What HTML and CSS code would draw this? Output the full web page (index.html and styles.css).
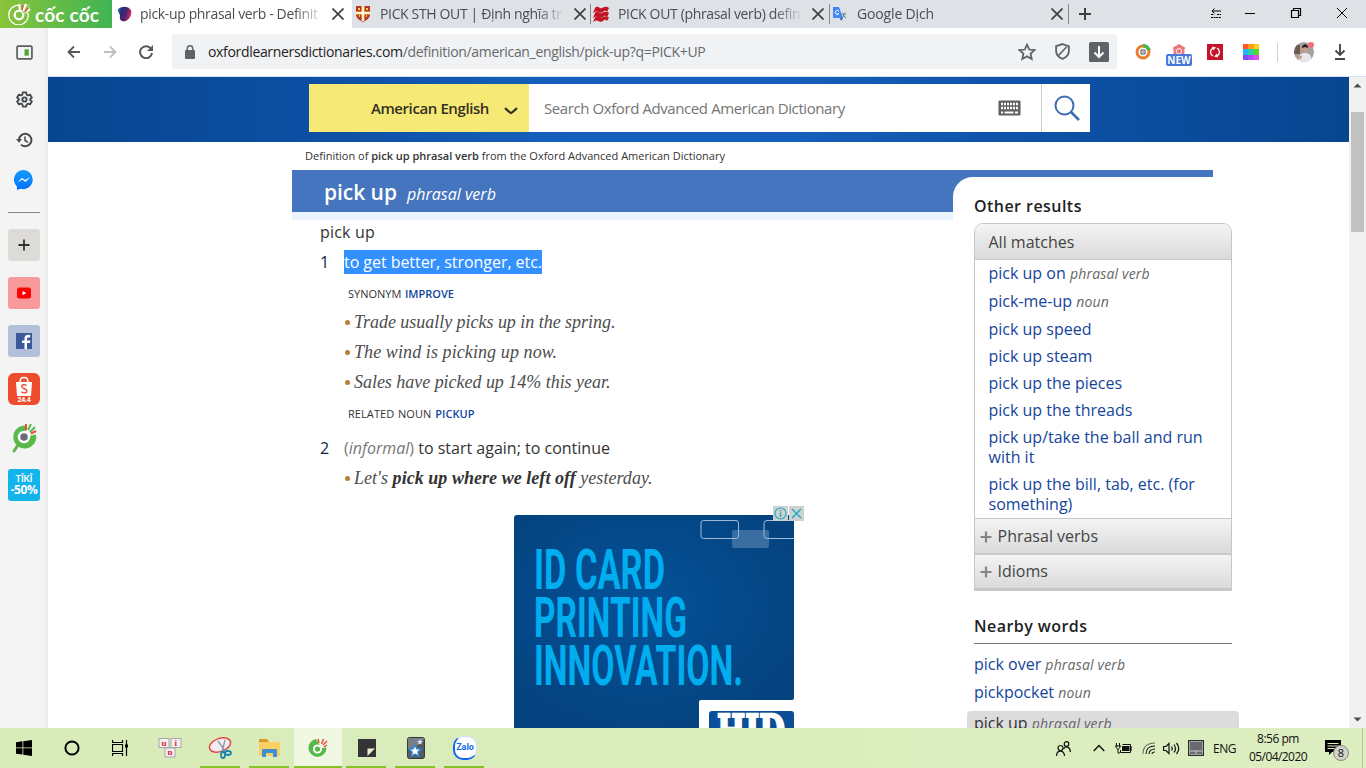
FILE: index.html
```html
<!DOCTYPE html>
<html lang="en">
<head>
<meta charset="utf-8">
<title>pick-up phrasal verb - Definition</title>
<link rel="stylesheet" href="styles.css">
</head>
<body>
<header class="tabs">
  <div class="brand">
    <svg class="brand-mark" viewBox="0 0 24 24"><circle cx="11.500" cy="14" r="9.800" fill="none" stroke="#fff" stroke-width="1.300"/><circle cx="12" cy="14" r="4.300" fill="none" stroke="#fff" stroke-width="2.300"/><path d="M12 3h11v9h-7z" fill="#8fcc5a"/><path d="M13 9l-1-6M16 10l3-7M18 12l5-4" stroke="#fff" stroke-width="2"/><path d="M15 9l1-5M18 11l3-4" stroke="#e8503c" stroke-width="1.500"/></svg>
    <span class="brand-name">cốc cốc</span>
  </div>
  <div class="tab active">
    <svg class="fav" viewBox="0 0 16 16"><defs><linearGradient id="ox" x1="0" x2="1" y2=".3"><stop offset="0" stop-color="#2a8fc8"/><stop offset=".3" stop-color="#2c2c78"/><stop offset=".7" stop-color="#4d256d"/><stop offset="1" stop-color="#d02b62"/></linearGradient></defs><path d="M1 3C4-.5 12-1 15 4c1 5-1 10-7 12-4 0-5-2-5-5C4 7 0 6 1 3z" fill="url(#ox)"/></svg>
    <span class="tab-title">pick-up phrasal verb - Definit</span>
    <svg class="close" viewBox="0 0 12 12"><path d="M.5.500l11 11M11.500.500l-11 11"/></svg>
  </div>
  <div class="tab">
    <svg class="fav" viewBox="0 0 16 16"><path d="M1 0h14v8c0 4-3 6-7 8-4-2-7-4-7-8z" fill="#b8332c"/><path d="M8 0v15M1 7h14" stroke="#f5cf4b" stroke-width="3"/><path d="M8 0v15M1 7h14" stroke="#fff" stroke-width="1.500"/><path d="M3 3h2M11 3h2M4 10h1M11 10h1" stroke="#f5cf4b" stroke-width="2"/></svg>
    <span class="tab-title">PICK STH OUT | Định nghĩa tr</span>
    <svg class="close" viewBox="0 0 12 12"><path d="M.5.500l11 11M11.500.500l-11 11"/></svg>
  </div>
  <div class="tab sep">
    <svg class="fav" viewBox="0 0 16 16"><g fill="#c41425"><path d="M2 2c2-2 3-1 5 0s3-1 4-1 3-1 5 1l-2 4c-2-2-3-1-4 0s-3 1-5 0-3 0-5 1z"/><path d="M2 7c2-2 3-1 5 0s3-1 4-1 3-1 5 1l-2 4c-2-2-3-1-4 0s-3 1-5 0-3 0-5 1z"/><path d="M2 11.500c2-2 3-1 5 0s3-1 4-1 3-1 5 1l-2 3.500c-2-2-3-1-4 0s-3 1-5 0-3 0-5 1z"/></g></svg>
    <span class="tab-title">PICK OUT (phrasal verb) defin</span>
    <svg class="close" viewBox="0 0 12 12"><path d="M.5.500l11 11M11.500.500l-11 11"/></svg>
  </div>
  <div class="tab sep">
    <svg class="fav" viewBox="0 0 16 16"><path d="M7 5h7a1 1 0 0 1 1 1v8a1 1 0 0 1-1 1h-4z" fill="#dadce0"/><path d="M1 1h6l4 11H2a1 1 0 0 1-1-1z" fill="#4285f4"/><path d="M8 12h3l-2 3z" fill="#2459c9"/><path d="M7 5.500A2 2 0 1 0 7 7.500H5.500" fill="none" stroke="#fff"/><path d="M10 8h4M12 7v1c0 2-1 3-2 4M11 9l3 3" stroke="#607d8b" fill="none"/></svg>
    <span class="tab-title gd">Google Dịch</span>
    <svg class="close" viewBox="0 0 12 12"><path d="M.5.500l11 11M11.500.500l-11 11"/></svg>
  </div>
  <div class="newtab sep"><svg width="12" height="12" viewBox="0 0 12 12"><path d="M6 0v12M0 6h12" stroke="#3c4043" stroke-width="2"/></svg></div>
  <div class="winctl">
    <svg width="12" height="12" viewBox="0 0 12 12"><path d="M2 4h9M4.500 1.500L2 4l2.500 2.500" fill="none" stroke="#000"/><path d="M1 7.500h3M7 7.500h4M1 10.500h10" stroke="#000" stroke-dasharray="2 .600"/></svg>
    <svg width="12" height="12" viewBox="0 0 12 12"><path d="M1 6.500h10" stroke="#000"/></svg>
    <svg width="12" height="12" viewBox="0 0 12 12"><path d="M1.500 3.500h7v7h-7zM3.500 3V1.500h7v7H9" fill="none" stroke="#000" stroke-width="1.200"/></svg>
    <svg width="12" height="12" viewBox="0 0 12 12"><path d="M1 1l10 10M11 1L1 11" stroke="#000"/></svg>
  </div>
</header>

<div class="middle">
  <aside class="side">
    <svg class="s-ico i1" viewBox="0 0 16 14"><rect x="1" y="1" width="14" height="12" rx="1" fill="none" stroke="#5a5e62" stroke-width="1.600"/><rect x="8" y="4" width="4" height="6" fill="#4fa836"/></svg>
    <svg class="s-ico i2" viewBox="0 0 24 24"><path d="M9.600 2h4.800l.6 3.200 2 1.100 3-1.100 2.400 4.200-2.400 2v1.400l2.400 2-2.400 4.100-3-1.100-2 1.200-.6 3.100H9.600L9 18.900l-2-1.200-3 1.100-2.400-4.100 2.400-2v-1.400l-2.400-2L4 5.200l3 1.100 2-1.100z" fill="none" stroke="#45484b" stroke-width="2.600" stroke-linejoin="round"/><circle cx="12" cy="12" r="3" fill="none" stroke="#45484b" stroke-width="2.800"/></svg>
    <svg class="s-ico i3" viewBox="0 0 17 16"><path d="M3 8a6.200 6.200 0 1 1 2 4.600" fill="none" stroke="#45484b" stroke-width="1.900"/><path d="M0 7h6L3 10.800z" fill="#45484b"/><path d="M9 4.500V8.500l3 1.800" fill="none" stroke="#45484b" stroke-width="1.500"/></svg>
    <svg class="s-ico i4" viewBox="0 0 20 20"><defs><linearGradient id="ms" x2="0" y2="1"><stop stop-color="#159dff"/><stop offset="1" stop-color="#0070fb"/></linearGradient></defs><path d="M10 0a9.600 9.600 0 1 1-3.500 18.800L3 20v-3.500A9.600 9.600 0 0 1 10 0z" fill="url(#ms)"/><path d="M3.500 12.500l4.500-4.800 2.900 2.200 5.600-3-5.200 5-2.900-2.300z" fill="#fff"/></svg>
    <hr>
    <div class="app plus"><svg viewBox="0 0 32 32"><path d="M16 10.500v11M10.500 16h11" stroke="#333" stroke-width="1.800"/></svg></div>
    <div class="app yt"><svg viewBox="0 0 32 32"><rect x="9" y="10.500" width="14" height="11" rx="2.500" fill="#f00"/><path d="M14.500 14v4.200l3.800-2.100z" fill="#fff"/></svg></div>
    <div class="app fb"><svg viewBox="0 0 32 32"><rect x="8" y="8" width="16" height="16" fill="#3b5998"/><path d="M19 24v-6h3l.4-2.500H19V14c0-1 .4-1.500 1.600-1.500h1.600V10c-3-.6-5.700 0-5.700 3.500v2H14V18h2.500v6z" fill="#fff"/></svg></div>
    <div class="app shopee"><svg viewBox="0 0 32 32"><path d="M8 9h16l-1 14H9z" fill="#fff"/><path d="M12 9c0-6 8-6 8 0" fill="none" stroke="#fff" stroke-width="1.500"/><path d="M18.700 12.500c-2-1.500-5-1-5 1 0 2.500 5.300 2 5.300 4.500 0 2-3 2.500-5.500.8" fill="none" stroke="#ee4d2d" stroke-width="1.400"/></svg><span class="s244">24.4</span></div>
    <div class="app"><svg viewBox="0 0 32 32"><path d="M10 24l-4 6" stroke="#62b848" stroke-width="3" stroke-linecap="round"/><path d="M17 4.500a11.500 11.500 0 1 0 11 9L21 15l-3-5z" fill="#5ab94a"/><circle cx="16" cy="16" r="5" fill="#6b6b78" stroke="#fff" stroke-width="2.500"/><path d="M18 9V3M23 12.500l5-2.500" stroke="#ee4e39" stroke-width="2"/><path d="M20 9l3-6M22 11l5-5" stroke="#57b848" stroke-width="2"/></svg></div>
    <div class="app tiki"><span class="tk">TÎKÎ</span><span class="t50">-50%</span></div>
  </aside>

  <div class="main">
    <div class="toolbar">
      <svg class="nav" viewBox="0 0 14 14"><path d="M13 7H2M7 1.500L1.500 7 7 12.500" fill="none" stroke="#55585c" stroke-width="1.800"/></svg>
      <svg class="nav n2" viewBox="0 0 14 14"><path d="M1 7h11M7 1.500L12.500 7 7 12.500" fill="none" stroke="#bdbfc2" stroke-width="1.800"/></svg>
      <svg class="nav n3" viewBox="0 0 14 14"><path d="M12 3.800A6 6 0 1 0 13 8" fill="none" stroke="#55585c" stroke-width="2"/><path d="M14 0v6H8z" fill="#55585c"/></svg>
      <div class="url">
        <svg class="lock" viewBox="0 0 10 14"><rect y="5" width="10" height="9" rx="1" fill="#5f6368"/><path d="M2.300 6V3.500a2.700 2.700 0 0 1 5.400 0V6" fill="none" stroke="#5f6368" stroke-width="1.500"/></svg>
        <span class="addr"><b>oxfordlearnersdictionaries.com</b>/definition/american_english/pick-up?q=PICK+UP</span>
        <svg class="star" viewBox="0 0 16 16"><path d="M8 1.500l2 4.300 4.700.5-3.500 3.200 1 4.800L8 11.900l-4.200 2.400 1-4.800L1.300 6.300 6 5.800z" fill="none" stroke="#5f6368" stroke-width="1.600"/></svg>
        <svg class="shield" viewBox="0 0 14 16"><path d="M7 1l6 2v4.500c0 3.500-2.500 6-6 7.500-3.500-1.500-6-4-6-7.500V3z" fill="none" stroke="#5f6368" stroke-width="1.700"/><path d="M3 12l8-8.500" stroke="#5f6368" stroke-width="1.600"/></svg>
        <svg class="dlbox" viewBox="0 0 20 20"><rect width="20" height="20" rx="1.500" fill="#5f6368"/><path d="M10 4v11M5.500 10.500L10 15l4.500-4.500" fill="none" stroke="#fff" stroke-width="2"/></svg>
      </div>
      <svg class="ext" viewBox="0 0 16 16"><circle cx="8" cy="8" r="6" fill="none" stroke="#ed7d2b" stroke-width="3"/><path d="M8 0c4 0 6 2 8 6l-4 0C11 4 10 3.500 8 3.500z" fill="#43b64e"/><circle cx="8" cy="8" r="3" fill="#777b85"/><path d="M8 5v6M5 8h6" stroke="#fff" stroke-width=".600"/></svg>
      <div class="newext"><svg viewBox="0 0 16 11"><path d="M8 0l7 4-1 2v5H2V6L1 4z" fill="#e9797e"/><circle cx="8" cy="8" r="3" fill="none" stroke="#fff"/></svg><span>NEW</span></div>
      <svg class="ext red" viewBox="0 0 16 16"><path fill="#c8142b" d="M0 0h16v16H0z"/><path d="M6 12a4.500 4.500 0 0 1 0-8M10 4a4.500 4.500 0 0 1 0 8" fill="none" stroke="#fff" stroke-width="1.300"/><path d="M5 2.500l4 1-3 3zM11 13.500l-4-1 3-3z" fill="#fff"/></svg>
      <svg class="ext pal" viewBox="0 0 16 16"><path fill="#ff5a1f" d="M0 0h5v5H0z"/><path fill="#ff9a1f" d="M5 0h6v5H5z"/><path fill="#ffd11f" d="M11 0h5v5h-5z"/><path fill="#22b8f5" d="M0 5h5v6H0z"/><path fill="#27d39b" d="M5 5h6v6H5z"/><path fill="#5bd12c" d="M11 5h5v6h-5z"/><path fill="#7b4df5" d="M0 11h5v5H0z"/><path fill="#a94df5" d="M5 11h6v5H5z"/><path fill="#e14df0" d="M11 11h5v5h-5z"/></svg>
      <span class="vsep"></span>
      <svg class="avatar" viewBox="0 0 20 20"><defs><clipPath id="av"><circle cx="10" cy="10" r="10"/></clipPath></defs><g clip-path="url(#av)"><path fill="#a8a09e" d="M0 0h20v20H0z"/><path fill="#6f5b52" d="M0 3h6v9H0z"/><path d="M5 20c-1-7 2-9 6-9s7 2 6 9z" fill="#e8e8ec"/><path d="M3 13l5 1-1 4z" fill="#c99b86"/><circle cx="11" cy="7.500" r="3" fill="#c99b86"/><path d="M8 6c0-5 6-5 6 0l-3-1z" fill="#221d1c"/></g><circle cx="17" cy="3" r="3" fill="#f26d75"/></svg>
      <svg class="dl" viewBox="0 0 12 16"><path d="M6 0v11M1.500 6.500L6 11l4.500-4.500M1 15h10" fill="none" stroke="#45484b" stroke-width="1.900"/></svg>
    </div>

    <div class="view">
      <div class="site">
        <div class="hero">
          <div class="search">
            <div class="dict"><span>American English</span><svg width="14" height="8" viewBox="0 0 14 8"><path d="M1 1.200c3 2.300 5 4.800 6 4.800s3-2.500 6-4.800" fill="none" stroke="#333022" stroke-width="2.300"/></svg></div>
            <div class="field"><span>Search Oxford Advanced American Dictionary</span><svg width="23" height="16" viewBox="0 0 23 16"><rect x=".5" y=".5" width="22" height="15" rx="1" fill="#5f5f5f"/><path d="M3 4h17M3 8h17" stroke="#fff" stroke-width="2.600" stroke-dasharray="2 1"/><path d="M3 12.500h2M6.500 12.500h9M17 12.500h3" stroke="#fff" stroke-width="2.200"/></svg></div>
            <div class="go"><svg width="26" height="26" viewBox="0 0 26 26"><circle cx="10.500" cy="10.500" r="9" fill="none" stroke="#3b6cb3" stroke-width="2"/><path d="M17 17l8 8" stroke="#3b6cb3" stroke-width="2.500"/></svg></div>
          </div>
        </div>
        <p class="crumb">Definition of <b>pick up phrasal verb</b> from the Oxford Advanced American Dictionary</p>
        <div class="rule"></div>
        <div class="cols">
          <main class="entry">
            <h1><strong>pick up</strong><em>phrasal verb</em></h1>
            <div class="pale"></div>
            <h2>pick up</h2>
            <div class="sense"><span class="num">1</span><span class="hl">to get better, stronger, etc.</span></div>
            <p class="xref">SYNONYM <a>IMPROVE</a></p>
            <ul class="ex">
              <li><span class="e1">Trade usually picks up in the spring.</span></li>
              <li><span class="e2">The wind is picking up now.</span></li>
              <li><span class="e1">Sales have picked up 14% this year.</span></li>
            </ul>
            <p class="xref rel">RELATED NOUN <a>PICKUP</a></p>
            <div class="sense two"><span class="num">2</span><span><i>(<em>informal</em>)</i> to start again; to continue</span></div>
            <ul class="ex"><li><span class="e3">Let's <b>pick up where we left off</b> yesterday.</span></li></ul>
            <div class="ad">
              <svg class="ad-art" width="280" height="213" viewBox="0 0 280 213">
                <defs><radialGradient id="adg" cx="46%" cy="42%" r="60%"><stop offset="0" stop-color="#04529a"/><stop offset="1" stop-color="#04437f"/></radialGradient></defs>
                <path d="M3 0h277v183q0 2-2 2H187q-2 0-2 2v26H0V3q0-3 3-3z" fill="url(#adg)"/>
                <g fill="none" stroke="#9dbcdc"><rect x="187" y="5.500" width="37.500" height="18" rx="2.500"/><path d="M280 5.500h-27q-3 0-3 3v12q0 3 3 3h27"/></g>
                <rect x="218" y="15" width="37" height="18" rx="2" fill="#8cabd0" fill-opacity=".4"/>
                <g class="ad-text"><text x="20" y="74" textLength="131" lengthAdjust="spacingAndGlyphs">ID CARD</text><text x="20" y="122" textLength="153" lengthAdjust="spacingAndGlyphs">PRINTING</text><text x="20" y="170" textLength="209" lengthAdjust="spacingAndGlyphs">INNOVATION.</text></g>
                <path d="M198 196h79q3 0 3 3v14h-85v-14q0-3 3-3z" fill="#0a4f97"/>
                <text class="hid" x="203" y="233" textLength="68" lengthAdjust="spacingAndGlyphs">HID</text>
              </svg>
              <svg class="adchoice" width="31" height="15" viewBox="0 0 31 15"><path d="M0 0h15v15H0zM16 0h15v15H16z" fill="#cfd1d1"/><circle cx="7.500" cy="7.500" r="5.500" fill="none" stroke="#25a9c4" stroke-width="1.200"/><path d="M7.500 6.500V11M7.500 4v1.300M19 3l9 9M28 3l-9 9" stroke="#25a9c4" stroke-width="1.500"/></svg>
            </div>
          </main>
          <aside class="rail">
            <h3>Other results</h3>
            <div class="box">
              <div class="bar first">All matches</div>
              <ul class="links">
                <li class="tall"><a>pick up on</a> <em>phrasal verb</em></li>
                <li class="tall"><a>pick-me-up</a> <em>noun</em></li>
                <li><a>pick up speed</a></li>
                <li><a>pick up steam</a></li>
                <li><a>pick up the pieces</a></li>
                <li><a>pick up the threads</a></li>
                <li><a>pick up/take the ball and run with it</a></li>
                <li><a>pick up the bill, tab, etc. (for something)</a></li>
              </ul>
              <div class="bar more"><svg width="12" height="12" viewBox="0 0 12 12"><path d="M6 .5v11M.5 6h11" stroke="#858585" stroke-width="2.200"/></svg>Phrasal verbs</div>
              <div class="bar more"><svg width="12" height="12" viewBox="0 0 12 12"><path d="M6 .5v11M.5 6h11" stroke="#858585" stroke-width="2.200"/></svg>Idioms</div>
            </div>
            <h3 class="near">Nearby words</h3>
            <ul class="nearby">
              <li><a>pick over</a> <em>phrasal verb</em></li>
              <li><a>pickpocket</a> <em>noun</em></li>
              <li class="cur">pick up <em>phrasal verb</em></li>
            </ul>
          </aside>
        </div>
      </div>
      <div class="scroll">
        <svg width="17" height="17" viewBox="0 0 17 17"><path d="M4.500 10.500h8l-4-4z" fill="#505050"/></svg>
        <span class="thumb"></span>
        <svg class="dn" width="17" height="17" viewBox="0 0 17 17"><path d="M4.500 6.500h8l-4 4z" fill="#505050"/></svg>
      </div>
    </div>
  </div>
</div>

<footer class="task">
  <div class="t"><svg width="16" height="16" viewBox="0 0 16 16"><path d="M0 2.200l6.500-.9v6.200H0zM7.300 1.200L16 0v7.500H7.300zM0 8.300h6.500v6.200L0 13.700zM7.300 8.300H16V16l-8.700-1.300z"/></svg></div>
  <div class="t"><svg width="16" height="16" viewBox="0 0 16 16"><circle cx="8" cy="8" r="6.600" fill="none" stroke="#000" stroke-width="2"/></svg></div>
  <div class="t"><svg width="16" height="16" viewBox="0 0 16 16"><path d="M.5 0v2.500h10V0M.5 16v-2.500h10V16M.5 4.500h10v7H.500zM14.500 0v16" fill="none" stroke="#000" stroke-width="1.200"/><path d="M13 4.500h3v3h-3z"/></svg></div>
  <div class="t uni"><svg width="24" height="20" viewBox="0 0 24 20"><g fill="#f4f1f2" stroke="#a9a4ad"><rect x="1" y=".5" width="10" height="9"/><rect x="13" y=".5" width="10" height="9"/><rect x="7" y="10" width="10" height="9"/></g><g class="keys"><text x="3.500" y="8">u</text><text x="16.500" y="8">i</text><text x="9.500" y="17">n</text></g></svg></div>
  <div class="t on"><svg width="26" height="24" viewBox="0 0 26 24"><ellipse cx="12" cy="9" rx="11" ry="6.500" transform="rotate(-20 12 9)" fill="#f4ecef" stroke="#dd4a4a" stroke-width="1.500"/><path d="M10 5l8 11M17 4l-3 12" stroke="#8d9aa6" stroke-width="1.400"/><g fill="none" stroke="#1c87ae" stroke-width="1.800"><ellipse cx="15" cy="19" rx="2" ry="3"/><ellipse cx="20" cy="17" rx="3" ry="2"/></g></svg></div>
  <div class="t on"><svg width="21" height="19" viewBox="0 0 21 19"><path d="M0 1q0-1 1-1h7l2 3H0z" fill="#d89a1c"/><path d="M0 3h20q1 0 1 1v13H0z" fill="#fbd063"/><path d="M3 18v-7q0-1 1-1h13q1 0 1 1v7h-4v-4H7v4z" fill="#3e8fd3"/></svg></div>
  <div class="t cur on"><svg width="20" height="20" viewBox="0 0 20 20"><path d="M8 1a9 9 0 1 0 10.500 8.500L14 10l-3-4z" fill="#54b948"/><circle cx="9.500" cy="11" r="3.600" fill="#54b948" stroke="#fff" stroke-width="2"/><path d="M11 5l-1-4M16 9l3-2" stroke="#e9503c" stroke-width="1.500"/><path d="M13.500 6l2-5M15 7l4-4" stroke="#e9503c" stroke-width="1.500"/></svg></div>
  <div class="t on"><svg width="18" height="18" viewBox="0 0 18 18"><path d="M0 0h18v18H0z" fill="#343436"/><path d="M9.500 9.500H17L9.500 17z" fill="#e9f0d0"/></svg></div>
  <div class="t on"><svg width="18" height="22" viewBox="0 0 18 22"><rect x=".5" y=".5" width="17" height="21" rx="2" fill="#555b60" stroke="#33383c"/><path d="M1 12C8 11 13 7 17 2V1H1z" fill="#9da3a7" opacity=".5"/><path d="M8 8l1.800 3.800 4.200.4-3.200 2.800 1 4.200L8 17l-3.700 2.200 1-4.200L2 12.200l4.200-.4z" fill="#fff" stroke="#2b8be0" stroke-width="1.300"/><path d="M13 2l.8 2 2.200.2-1.700 1.300.5 2L13 6.500l-1.800 1 .5-2L10 4.200l2.200-.2z" fill="#dff1ff"/></svg></div>
  <div class="t on"><span class="zalo">Zalo</span></div>
  <div class="tray">
    <svg class="people" width="15" height="15" viewBox="0 0 15 15"><g fill="none" stroke="#111" stroke-width="1.200"><circle cx="4.500" cy="7" r="2.500"/><circle cx="10.500" cy="3" r="2.300"/><path d="M.6 15C.6 8.500 8.500 8.500 8.500 15M7.500 8c2-4 7-2 6.800 3"/></g></svg>
    <svg class="chev" width="12" height="8" viewBox="0 0 12 8"><path d="M.7 7L6 1.500 11.300 7" fill="none" stroke="#111" stroke-width="1.400"/></svg>
    <svg class="bat" width="17" height="11" viewBox="0 0 17 11"><path d="M7 3h7.500v5H7z" fill="#111"/><path d="M7.500 1.500h8v8h-10V7M15.500 4H17v3h-1.500M1.500 0v3M4.500 0v3M0 3h6M1 3c0 4 4 4 4 0M3 6v4h2" fill="none" stroke="#111"/></svg>
    <svg class="wifi" width="14" height="13" viewBox="0 0 14 13"><g fill="none" stroke="#111" stroke-width="1.100"><path d="M1 12C1 5 5 1 13 1" stroke="#666"/><path d="M4 12c0-5 3-8 9-8"/><path d="M7 12c0-3 2-5 6-5"/><path d="M10 12c0-1 1-2 3-2"/></g></svg>
    <svg class="vol" width="17" height="13" viewBox="0 0 17 13"><path d="M.6 4.500H3L6 1.500v10L3 8.500H.600zM8.500 4.500q1.500 2 0 4M11 2.500q3 4 0 8M13.500 1q4.500 5.500 0 11" fill="none" stroke="#111" stroke-width="1.200"/></svg>
    <svg class="pad" width="16" height="16" viewBox="0 0 16 16"><rect x=".7" y=".7" width="14.600" height="14.600" fill="#eee" stroke="#222" stroke-width="1.300"/><path d="M2 2h12v12H2z" fill="#686a70"/><path d="M2 11h12M8 11v3" stroke="#ccc"/></svg>
    <span class="lang">ENG</span>
    <span class="clock"><span>8:56 pm</span><span class="date">05/04/2020</span></span>
    <span class="note"><svg width="16" height="15" viewBox="0 0 16 15"><path d="M0 0h16v12H7l-3 3v-3H0z"/><path d="M2.500 3.500h11M2.500 6h11M2.500 8.500h7" stroke="#dff0bd"/></svg><span class="cnt">8</span></span>
    <span class="peek"></span>
  </div>
</footer>
</body>
</html>
```
FILE: styles.css
```css
* { box-sizing: border-box; }
body { margin: 0; width: 1366px; height: 768px; overflow: hidden; display: flex; flex-direction: column; font-family: "Open Sans", sans-serif; color: #333; background: #fff; }
svg { display: block; flex: none; }
p, h1, h2, h3, ul { margin: 0; padding: 0; list-style: none; }

/* tab strip */
.tabs { display: flex; height: 28px; flex: none; background: #dee1e6; }
.brand { width: 112px; display: flex; padding: 1px 0 0 7px; background: linear-gradient(90deg, #8ac43a, #3fb454); }
.brand-mark { width: 24px; height: 24px; }
.brand-name { margin: 4px 0 0 4px; font: 700 19px/20px Lato, sans-serif; letter-spacing: 0.2px; color: #fff; white-space: nowrap; }
.tab { position: relative; width: 239px; display: flex; align-items: center; padding-left: 3px; font-size: 14px; letter-spacing: -0.35px; color: #4a4e53; }
.tab.active { width: 240px; padding-left: 5px; background: #fff; }
.tab.sep { width: 239px; padding-left: 2px; }
.tab.sep::before, .newtab.sep::before { content: ""; position: absolute; left: -1px; top: 4px; width: 1px; height: 20px; background: #85888d; }
.fav { width: 16px; height: 16px; margin-right: 9px; }
.active .fav { width: 15px; margin-right: 8px; }
.tab-title { width: 186px; line-height: 20px; white-space: nowrap; -webkit-mask-image: linear-gradient(90deg, #000 84%, transparent); mask-image: linear-gradient(90deg, #000 84%, transparent); }
.active .tab-title { width: 184px; }
.gd { letter-spacing: -0.15px; }
.close { width: 12px; height: 12px; margin: 0 0 1px 8px; stroke: #3c4043; stroke-width: 1.7; fill: none; }
.newtab { position: relative; width: 30px; display: flex; align-items: center; padding-left: 10px; }
.winctl { margin-left: auto; display: flex; align-items: center; gap: 22px; padding: 0 18px 2px 0; }
.winctl svg:nth-child(3) { margin: 0 12px; }

/* left sidebar */
.middle { display: flex; height: 700px; flex: none; }
.side { width: 48px; background: #f4f4f4; display: flex; flex-direction: column; align-items: center; box-shadow: inset -6px 0 6px -6px #ddd; }
.i1 { width: 17px; height: 15px; margin-top: 17px; }
.i2 { width: 17px; height: 17px; margin-top: 31px; }
.i3 { width: 17px; height: 16px; margin-top: 24px; }
.i4 { width: 20px; height: 20px; margin-top: 22px; }
.side hr { width: 32px; height: 1px; margin: 22px 0 16px; border: 0; background: #85868a; flex: none; }
.app { width: 32px; height: 32px; flex: none; margin-bottom: 16px; border-radius: 3px; position: relative; }
.app svg { width: 32px; height: 32px; }
.plus { background: #dcdbd8; }
.yt { background: #f89a9a; }
.fb { background: #b3bfdb; }
.shopee { background: #ee4d2d; border-radius: 6px; }
.s244 { position: absolute; left: 0; right: 0; bottom: 0; font: 700 7px/9px Roboto, sans-serif; text-align: center; color: #fff; letter-spacing: -0.3px; }
.tiki { background: #13b3ec; display: flex; flex-direction: column; align-items: center; padding-top: 5px; color: #fff; }
.tk { font: 700 9px/9px Lato, sans-serif; }
.t50 { font: 700 12px/13px "Open Sans", sans-serif; letter-spacing: -0.4px; }

/* address bar */
.main { width: 1318px; display: flex; flex-direction: column; }
.toolbar { height: 49px; flex: none; display: flex; align-items: center; padding-left: 19px; border-bottom: 1px solid #d5e1f0; }
.nav { width: 14px; height: 14px; }
.n2 { margin-left: 22px; }
.n3 { margin-left: 22px; }
.url { width: 945px; height: 35px; margin-left: 19px; border-radius: 3px; background: #f1f2f4; display: flex; align-items: center; padding: 0 8px 0 13px; margin-top: -1px; }
.lock { width: 10px; height: 14px; margin-top: 1px; }
.addr { margin: 1px 0 0 13px; font-size: 14px; line-height: 20px; letter-spacing: -0.33px; color: #66696e; white-space: nowrap; }
.addr b { font-weight: 400; color: #222; }
.star { width: 18px; height: 18px; margin-left: auto; }
.shield { width: 15px; height: 17px; margin-left: 19px; }
.dlbox { width: 20px; height: 20px; margin-left: 19px; }
.ext { width: 16px; height: 16px; margin-left: 18px; }
.newext { width: 26px; height: 26px; margin: 4px 0 0 15px; display: flex; flex-direction: column; align-items: center; padding-top: 3px; }
.newext svg { width: 16px; height: 10px; }
.newext span { width: 26px; height: 12px; border-radius: 2px; background: #4577dc; color: #fff; font: 700 10px/12px "Open Sans", sans-serif; text-align: center; }
.red { margin-left: 15px; }
.pal { margin-left: 20px; }
.vsep { width: 1px; height: 19px; margin-left: 18px; background: #cfd0d2; }
.avatar { width: 20px; height: 20px; margin-left: 16px; }
.dl { width: 12px; height: 16px; margin-left: 20px; }

/* web page */
.view { display: flex; height: 651px; }
.site { width: 1301px; overflow: hidden; }
.scroll { width: 17px; background: #f1f1f1; display: flex; flex-direction: column; align-items: center; }
.thumb { width: 13px; height: 120px; margin-top: 18px; background: #c1c1c1; }
.dn { margin-top: auto; }
.hero { height: 65px; padding: 7px 0 0 261px; background: linear-gradient(90deg, #07458f, #0d4fa3 20%, #1660bc 40%, #1660bc 55%, #0d4fa3 80%, #07458f); }
.search { width: 781px; height: 48px; display: flex; background: #fff; }
.dict { width: 220px; display: flex; align-items: center; justify-content: flex-end; gap: 15px; padding-right: 11px; background: #f7e976; color: #333022; font-weight: 600; font-size: 15px; letter-spacing: -0.4px; }
.dict svg { margin-top: 5px; }
.field { width: 512px; display: flex; align-items: center; justify-content: space-between; padding: 0 20px 0 15px; font-size: 15px; letter-spacing: -0.41px; color: #757575; }
.go { flex: 1; border-left: 1px solid #ccc; display: flex; align-items: center; justify-content: center; padding-left: 2px; }
.crumb { height: 28px; padding-left: 257px; font-size: 11px; line-height: 28px; }
.crumb b { font-weight: 600; }
.rule { height: 7px; width: 921px; margin-left: 244px; background: #4575be; }
.cols { display: flex; margin-left: 244px; }
.entry { width: 661px; }
.entry h1 { height: 35px; display: flex; align-items: baseline; padding-left: 32px; background: #4575be; color: #fff; }
.entry h1 strong { width: 73px; font-size: 21px; font-weight: 600; line-height: 30px; white-space: nowrap; letter-spacing: -0.05px; }
.entry h1 em { margin-left: 10px; font-size: 16px; font-weight: 400; line-height: 30px; }
.pale { height: 8px; background: #ebf3ff; }
.entry h2 { padding: 0 0 0 28px; font-size: 16px; font-weight: 500; line-height: 24px; letter-spacing: 0.2px; }
.sense { display: flex; margin-top: 6px; padding-left: 28px; font-size: 16px; line-height: 24px; }
.num { width: 24px; color: #0b1f4a; }
.hl { background: #3390ff; color: #fff; letter-spacing: -0.05px; }
.sense i { color: #777; font-style: normal; }
.xref { margin: 10px 0 7px; padding-left: 56px; font-size: 11px; line-height: 20px; word-spacing: 0.8px; }
.xref a { color: #0f479f; font-weight: 600; }
.ex li { height: 30px; padding-left: 62px; position: relative; font: italic 18px/22px "Liberation Serif", serif; color: #4d4d4d; }
.ex li::before { content: ""; position: absolute; left: 52.5px; top: 9px; width: 5px; height: 5px; border-radius: 50%; background: #b87e39; }
.ex b { color: #333; }
.e1 { letter-spacing: -0.03px; }
.e2 { letter-spacing: 0.09px; }
.e3 { letter-spacing: 0.04px; }
.rel { margin: 3px 0 0; letter-spacing: 0.07px; }
.two { margin: 12px 0 7px; }
.ad { position: relative; width: 280px; height: 213px; margin: 18px 0 0 222px; }
.sense + .ex { height: 30px; }
.ad-text text { font: 700 56px Roboto, sans-serif; fill: #00adef; }
.hid { font: 700 46px "DejaVu Serif", serif; fill: #fff; stroke: #fff; stroke-width: 2.5; }
.adchoice { position: absolute; left: 259px; top: -9px; }

/* right rail */
.rail { width: 286px; padding: 17px 7px 0 21px; background: radial-gradient(circle at 20px 20px, #fff 19.5px, #4575be 20.5px) 0 0 / 20px 20px no-repeat; }
.rail h3 { font-size: 16px; font-weight: 600; line-height: 24px; letter-spacing: 0.45px; color: #222; }
.box { width: 258px; margin-top: 5px; border: 1px solid #c6c6c6; border-radius: 9px 9px 0 0; overflow: hidden; font-size: 16px; }
.bar { height: 36px; line-height: 35px; background: linear-gradient(#f4f4f4, #dadada); border-bottom: 2px solid #c8c8c8; color: #444; }
.first { height: 36px; line-height: 36px; padding-left: 13.5px; border-bottom-width: 1px; }
.more { display: flex; align-items: center; gap: 6px; padding-left: 4.5px; }
.more svg { margin-top: 1px; }
.links { padding: 3px 14px 0 13.5px; height: 259px; line-height: 20px; border-bottom: 1px solid #c8c8c8; }
.box .bar:last-child { height: 35px; }
.links li { margin-bottom: 7px; width: 222px; }
.links li.tall { line-height: 21px; }
.rail a { color: #14459b; }
.rail em { font-size: 14px; letter-spacing: 0.18px; color: #666; }
.rail h3.near { margin-top: 23px; padding-bottom: 5px; border-bottom: 1px solid #77777f; line-height: 24px; width: 258px; }
.nearby { padding-top: 9px; font-size: 16px; line-height: 22px; }
.nearby li { height: 22px; margin-bottom: 6px; }
.nearby .cur { width: 272px; height: 30px; margin-left: -7px; margin-top: 8px; padding: 1px 7px; border-radius: 4px; background: #dcdcdc; color: #333; }

/* taskbar */
.task { height: 40px; flex: none; display: flex; background: linear-gradient(90deg, #d9ebb9, #ddeec0); }
.t { width: 49px; height: 40px; display: flex; align-items: center; justify-content: center; position: relative; }
.t:first-child { width: 48px; }
.t:nth-child(2), .t:nth-child(3) { width: 48px; }
.uni { padding-right: 1px; width: 52px; }
.on::after { content: ""; position: absolute; left: 4px; right: 5px; bottom: 0; height: 2px; background: #85c226; }
.cur.on::after { left: 0; right: 0; }
.t.cur { background: #f0f7e3; width: 48px; }
.keys text { font: 700 9px "Liberation Serif", serif; fill: #d21f2f; }
.zalo { width: 24px; height: 24px; border-radius: 10px; background: #fff; border: 2px solid #1266ef; border-top: 1px solid #cfe0fb; border-right: 1px solid #cfe0fb; color: #0d6bea; font: 700 9px/20px Roboto, sans-serif; text-align: center; }
.tray { margin-left: auto; display: flex; align-items: center; font-size: 12px; color: #111; }
.chev { margin-left: 22px; }
.bat { margin-left: 10px; }
.wifi { margin-left: 10px; }
.vol { margin-left: 7px; }
.pad { margin-left: 8px; }
.lang { margin-left: 9px; width: 24px; letter-spacing: -0.48px; }
.clock { width: 60px; margin-left: 11px; display: flex; flex-direction: column; align-items: center; line-height: 18px; letter-spacing: -0.47px; }
.date { letter-spacing: -0.57px; }
.note { position: relative; margin-left: 17px; width: 25px; height: 20px; padding-top: 2px; }
.cnt { position: absolute; left: 8px; top: 7px; width: 16px; height: 16px; border: 1px solid #8b8b8b; border-radius: 50%; background: #cfd3c8; font-size: 11px; line-height: 14px; text-align: center; }
.peek { width: 1px; height: 40px; margin: 0 3px 0 12px; background: #b8c79c; }
```
